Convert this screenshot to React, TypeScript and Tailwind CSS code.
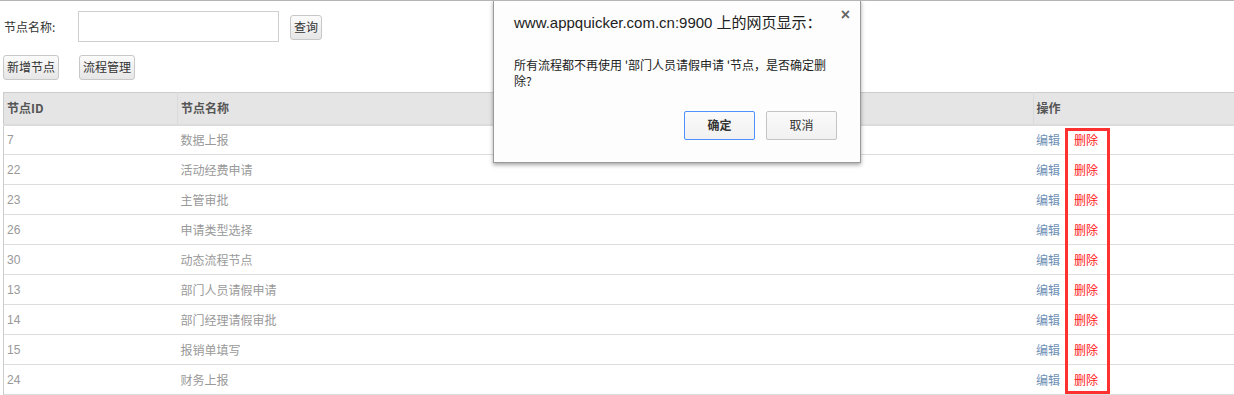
import React from 'react'

const rows = [
  ['7', '数据上报'],
  ['22', '活动经费申请'],
  ['23', '主管审批'],
  ['26', '申请类型选择'],
  ['30', '动态流程节点'],
  ['13', '部门人员请假申请'],
  ['14', '部门经理请假审批'],
  ['15', '报销单填写'],
  ['24', '财务上报'],
]

const font = { fontFamily: '"Microsoft YaHei", "Noto Sans CJK SC", "Liberation Sans", sans-serif' }

function Btn({ children }: { children: React.ReactNode }) {
  return (
    <button className="h-[25px] px-[3px] border border-[#c8c8c8] rounded-[3px] bg-gradient-to-b from-[#fbfbfb] to-[#e6e6e6] text-[12px] text-[#333] leading-none">
      {children}
    </button>
  )
}

export default function App() {
  return (
    <div className="relative w-[1234px] h-[395px] overflow-hidden bg-white border-t border-[#b5b5b5]" style={font}>
      <div className="pl-[3px]">
        {/* search */}
        <div className="flex items-center h-[41px] pt-[10px]">
          <span className="text-[12px] text-[#333] ml-[1px] w-[74px]">节点名称:</span>
          <input className="w-[201px] h-[31px] border border-[#cfcfcf] bg-white outline-none" />
          <div className="ml-[11px]">
            <Btn>查询</Btn>
          </div>
        </div>
        <div className="flex items-center gap-[20px] mt-[12px] h-[26px]">
          <Btn>新增节点</Btn>
          <Btn>流程管理</Btn>
        </div>

        {/* table */}
        <table className="mt-[12px] w-[1231px] border-collapse text-[12px]">
          <thead>
            <tr className="bg-[#e5e5e5] h-[32px] border-t border-[#cccccc] border-b-2 border-b-[#dcdcdc]">
              <th className="w-[174px] text-left pl-[3px] font-bold text-[#555] border-l border-[#cccccc] border-r border-r-[#dadada]">节点ID</th>
              <th className="text-left pl-[3px] font-bold text-[#555] border-r border-[#dadada]">节点名称</th>
              <th className="w-[201px] text-left pl-[3px] font-bold text-[#555]">操作</th>
            </tr>
          </thead>
          <tbody>
            {rows.map(([id, name]) => (
              <tr key={id} className="h-[30px] border-b border-[#dddddd]">
                <td className="pl-[3px] text-[#999] border-l border-[#cccccc]" style={{ fontFamily: '"Liberation Sans", "Noto Sans CJK SC", sans-serif' }}>{id}</td>
                <td className="pl-[3px] text-[#999]">{name}</td>
                <td className="pl-[3px]">
                  <span className="text-[#6d8fb5]">编辑</span>
                  <span className="ml-[14px] text-[#ff2020]">删除</span>
                </td>
              </tr>
            ))}
          </tbody>
        </table>
      </div>

      {/* highlight box */}
      <div className="absolute left-[1065px] top-[127px] w-[45px] h-[266px] border-[3px] border-[#ff3030]" />

      {/* alert dialog */}
      <div className="absolute left-[493px] top-[-1px] w-[368px] h-[163px] bg-[#fdfdfd] border border-[#9a9a9a] border-t-0 shadow-[0_2px_4px_rgba(0,0,0,0.35)]">
        <div className="relative">
          <div className="pt-[12px] pl-[20px] text-[15px] text-[#222]" style={{ fontFamily: '"Liberation Sans", "Noto Sans CJK SC", sans-serif' }}>
            www.appquicker.com.cn:9900 上的网页显示：
          </div>
          <span className="absolute right-[10px] top-[3px] text-[16px] font-bold text-[#666]" style={{ fontFamily: '"Liberation Sans", sans-serif' }}>×</span>
        </div>
        <div className="mt-[22px] pl-[20px] pr-[20px] text-[12px] leading-[16px] text-[#222]">
          所有流程都不再使用 '部门人员请假申请 '节点，是否确定删除?
        </div>
        <div className="flex justify-end gap-[11px] pr-[23px] mt-[22px]">
          <button className="w-[71px] h-[29px] border border-[#4d90fe] rounded-[2px] bg-gradient-to-b from-[#fafafa] to-[#f1f1f1] text-[12px] font-bold text-[#333]">确定</button>
          <button className="w-[71px] h-[29px] border border-[#c4c4c4] rounded-[2px] bg-gradient-to-b from-[#fafafa] to-[#f1f1f1] text-[12px] text-[#333]">取消</button>
        </div>
      </div>
    </div>
  )
}
